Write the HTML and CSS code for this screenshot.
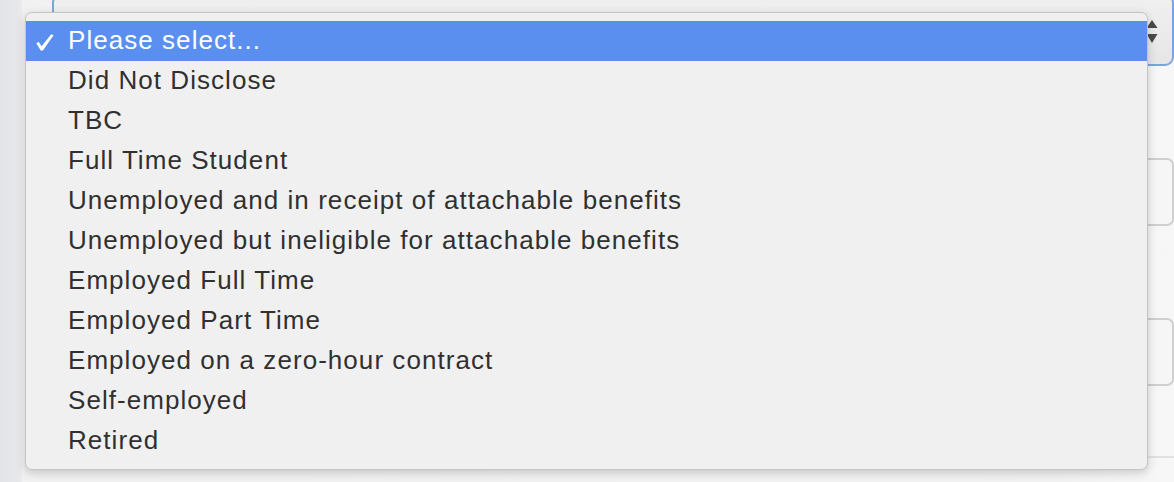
FILE: index.html
```html
<!DOCTYPE html>
<html>
<head>
<meta charset="utf-8">
<link rel="stylesheet" href="styles.css">
</head>
<body>
<div class="page">
  <aside class="sidebar"></aside>
  <main class="main">
    <div class="select">
      <span class="arrows">
        <svg width="12" height="24" viewBox="0 0 12 24"><path d="M6 0 L11.5 8 L0.5 8 Z" fill="#4a4a4a"/><path d="M0.5 14 L11.5 14 L6 23 Z" fill="#4a4a4a"/></svg>
      </span>
    </div>
    <div class="gap1"></div>
    <div class="input"></div>
    <div class="gap2"></div>
    <div class="input"></div>
    <div class="gap3"></div>
    <div class="rule"></div>
  </main>
  <ul class="menu">
    <li class="item selected"><svg class="check" width="18" height="17" viewBox="0 0 18 17"><path d="M0.3 9.2 L2.6 7.8 L5.6 12.3 L15.2 0.2 L17.6 1.2 L6.9 16.6 L4.7 16.6 Z" fill="#ffffff"/></svg>Please select...</li>
    <li class="item">Did Not Disclose</li>
    <li class="item">TBC</li>
    <li class="item">Full Time Student</li>
    <li class="item">Unemployed and in receipt of attachable benefits</li>
    <li class="item">Unemployed but ineligible for attachable benefits</li>
    <li class="item">Employed Full Time</li>
    <li class="item">Employed Part Time</li>
    <li class="item">Employed on a zero-hour contract</li>
    <li class="item">Self-employed</li>
    <li class="item">Retired</li>
  </ul>
</div>
</body>
</html>
```
FILE: styles.css
```css
html, body {
  margin: 0;
  padding: 0;
  width: 1174px;
  height: 482px;
  overflow: hidden;
  font-family: "Liberation Sans", Arial, sans-serif;
}
.page {
  position: relative;
  display: flex;
  width: 1174px;
  height: 482px;
  background: #f2f2f2;
}
.sidebar {
  width: 22px;
  flex: none;
  background: linear-gradient(to right, #e3e4e7, #e6e7ea 80%, #ebebec);
}
.main {
  flex: 1;
  display: flex;
  flex-direction: column;
  padding-left: 30px;
  background: linear-gradient(to right, #f1f1f1, #f2f2f2 90%, #f7f7f7);
}
.select {
  height: 72px;
  margin-top: -6px;
  box-sizing: border-box;
  border: 2px solid #78a6da;
  border-radius: 9px;
  background: linear-gradient(to bottom, #f0f0f0, #e6e6e6);
  display: flex;
  justify-content: flex-end;
  align-items: center;
  padding-right: 14px;
  padding-top: 4px;
}
.arrows {
  display: flex;
}
.gap1 { height: 92px; flex: none; }
.input {
  height: 68px;
  flex: none;
  box-sizing: border-box;
  border: 2px solid #cfcfcf;
  border-radius: 7px;
  background: linear-gradient(to right, #f0f0f0, #f6f6f6);
}
.gap2 { height: 92px; flex: none; }
.gap3 { height: 70px; flex: none; }
.rule {
  height: 2px;
  background: #e1e1e1;
}
.menu {
  position: absolute;
  left: 25px;
  top: 12px;
  width: 1123px;
  margin: 0;
  padding: 8px 0;
  list-style: none;
  box-sizing: border-box;
  background: #f0f0f0;
  border: 1px solid #c4c4c4;
  border-radius: 7px;
  box-shadow: 0 3px 10px rgba(0,0,0,0.18);
}
.item {
  position: relative;
  height: 40px;
  line-height: 38px;
  padding-left: 42px;
  font-size: 26px;
  letter-spacing: 1.05px;
  color: #303030;
  white-space: nowrap;
}
.item.selected {
  background: #5b8fef;
  color: #ffffff;
}
.check {
  position: absolute;
  left: 10px;
  top: 13px;
}
```
